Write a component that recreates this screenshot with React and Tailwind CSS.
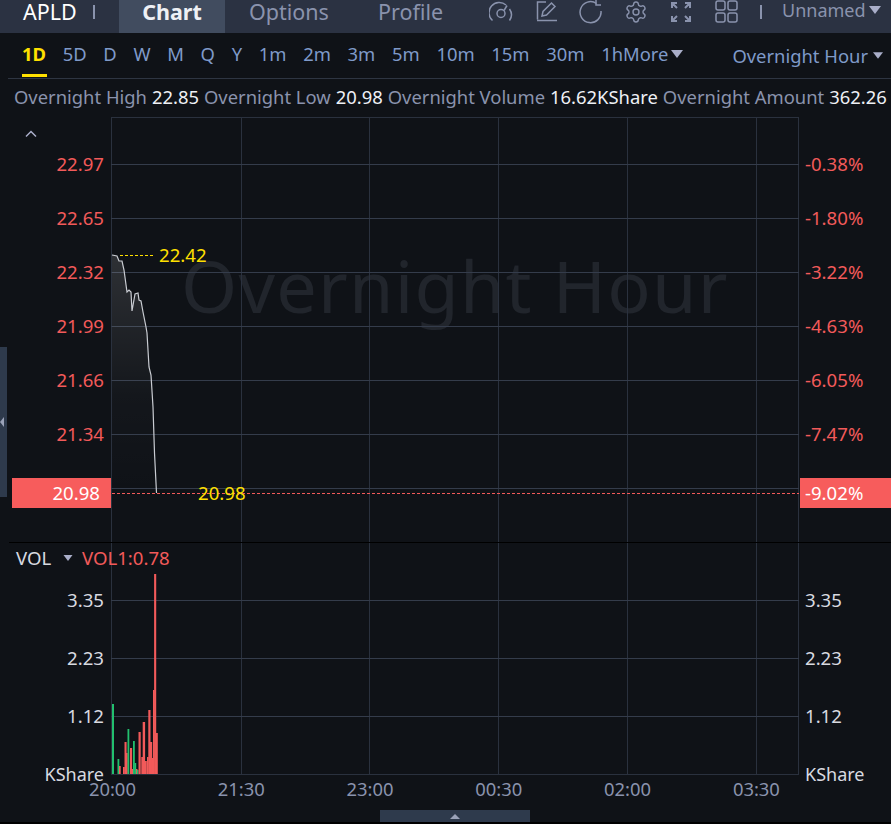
import React from "react";
import { Settings } from "lucide-react";

const intervals = ["5D", "D", "W", "M", "Q", "Y", "1m", "2m", "3m", "5m", "10m", "15m", "30m"];

const priceTicks = [
  { left: "22.97", right: "-0.38%" },
  { left: "22.65", right: "-1.80%" },
  { left: "22.32", right: "-3.22%" },
  { left: "21.99", right: "-4.63%" },
  { left: "21.66", right: "-6.05%" },
  { left: "21.34", right: "-7.47%" },
];

const volTicks = ["3.35", "2.23", "1.12", "KShare"];
const timeTicks = ["20:00", "21:30", "23:00", "00:30", "02:00", "03:30"];

const gridX = [241, 369, 498, 627, 756];
const priceLine =
  "112 255L117 256L119 261L122 261L124 270L127 292L129 290L131 292L132 311L135 294L138 293L139 300L141 301L143 312L146 327L147 333L149 367L151 375L153 407L154.500 453L156.500 493";

const RED = "#f25a5a";
const GREEN = "#22c06e";

// x, width, top y, colour
const bars = [
  [112, 2, 704, GREEN], [117.5, 1.8, 759, GREEN], [119, 1.7, 766, RED], [123, 1.8, 767, RED],
  [124.5, 2.1, 742, RED], [126, 1.7, 753, RED], [127.5, 1.8, 729, GREEN], [130, 2.1, 748, RED],
  [131.7, 1.9, 769, RED], [133, 1.8, 741, GREEN], [134.5, 1.7, 763, GREEN], [136, 1.5, 769, RED],
  [136.8, 1.7, 770, GREEN], [138.5, 2.2, 732, RED], [141.3, 1.9, 757, RED], [142.7, 2.4, 722, RED],
  [144.7, 2.1, 761, RED], [147, 1.7, 757, RED], [148.3, 2.2, 710, RED], [150, 2.2, 742, RED],
  [151.7, 1.8, 758, RED], [153, 1.6, 690, RED], [154.1, 2.1, 574, RED], [155.7, 2.1, 733, RED],
];

const Caret = ({ className }) => (
  <svg viewBox="0 0 12 8" className={className} fill="currentColor">
    <path d="M0 0h12L6 8z" />
  </svg>
);

const Toolbar = () => (
  <div className="ml-[24px] flex items-center gap-[21px] text-[#8a93ad]">
    <svg viewBox="0 0 24 24" className="w-6 h-6" fill="none" stroke="currentColor" strokeWidth="1.5">
      <path d="M3.500 20.500A10 10 0 0 1 17 5M20.500 9A10 10 0 0 1 20.500 20.500" />
      <circle cx="12" cy="13.500" r="4" />
      <path d="M15 10.500l3-5" />
    </svg>
    <svg viewBox="0 0 24 24" className="w-6 h-6" fill="none" stroke="currentColor" strokeWidth="1.5">
      <path d="M12 2H3.500v17.500M3 20.500h20" />
      <path d="M8 16l1-4.500L17.500 3l3.500 3.500-8.500 8.500z" />
    </svg>
    <svg viewBox="0 0 24 24" className="w-6 h-6" fill="none" stroke="currentColor" strokeWidth="1.5">
      <path d="M22 11A10.500 10.500 0 1 1 17.500 3.500" />
      <path d="M17 0v5h5" />
    </svg>
    <Settings className="w-6 h-6" strokeWidth={1.4} />
    <svg viewBox="0 0 24 24" className="w-6 h-6" fill="none" stroke="currentColor" strokeWidth="2">
      <path d="M8 3H3v5M3 3l5 5M16 3h5v5M21 3l-5 5M3 16v5h5M3 21l5-5M21 16v5h-5M21 21l-5-5" />
    </svg>
    <svg viewBox="0 0 24 24" className="w-6 h-6" fill="none" stroke="currentColor" strokeWidth="1.5">
      <rect x="2" y="1" width="9" height="9" rx="2" />
      <rect x="14" y="1" width="9" height="9" rx="2" />
      <rect x="2" y="13" width="9" height="9" rx="2" />
      <rect x="14" y="13" width="9" height="9" rx="2" />
    </svg>
  </div>
);

const PricePlot = () => (
  <svg viewBox="111 117 688 425" className="block w-[688px] h-[425px]" fill="none">
    <defs>
      <linearGradient id="area" x1="0" y1="0" x2="0" y2="1">
        <stop offset="0" stopColor="#ffffff" stopOpacity="0.13" />
        <stop offset="0.6" stopColor="#ffffff" stopOpacity="0.02" />
        <stop offset="1" stopColor="#ffffff" stopOpacity="0" />
      </linearGradient>
    </defs>
    <path d="M111.500 117V542M798.500 117V542M111 117.500H799" stroke="#2a313e" />
    {gridX.map((x) => (
      <path key={x} d={`M${x + 0.5} 117V542`} stroke="#2a313e" />
    ))}
    {[164, 218, 272, 326, 380, 434, 488].map((y) => (
      <path key={y} d={`M111 ${y + 0.5}H799`} stroke="#343c4b" />
    ))}
    <path d={`M${priceLine}L112 493Z`} fill="url(#area)" />
    <path d={`M${priceLine}`} stroke="#c9ccd2" strokeWidth="1.2" />
    <path d="M120 255.500H154" stroke="#ffe000" strokeDasharray="3 2" />
    <path d="M112 493.500H799" stroke={RED} strokeDasharray="3 2" />
  </svg>
);

const VolumePlot = () => (
  <svg viewBox="111 543 688 232" className="block w-[688px] h-[232px]" fill="none">
    <path d="M111.500 543V775M798.500 543V775M111 774.500H799" stroke="#2a313e" />
    {gridX.map((x) => (
      <path key={x} d={`M${x + 0.5} 543V775`} stroke="#2a313e" />
    ))}
    {[600, 658, 716].map((y) => (
      <path key={y} d={`M111 ${y + 0.5}H799`} stroke="#343c4b" />
    ))}
    {bars.map(([x, w, top, color], i) => (
      <rect key={i} x={x} y={top} width={w} height={774 - top} fill={color} />
    ))}
  </svg>
);

export default function App() {
  return (
    <div className="relative w-[891px] h-[824px] overflow-hidden bg-black font-['Noto_Sans','Open_Sans',sans-serif] text-[18.6px]">
      <div className="h-[822px] bg-[#0f1217] flex flex-col">
        {/* header */}
        <div className="h-[33px] shrink-0 bg-[#2b3242] flex items-start pl-[23px] whitespace-nowrap">
          <span className="w-[70px] text-[21.5px] leading-[23px] text-white">APLD</span>
          <span className="w-[2px] h-[14px] mt-[5px] bg-[#8a93ad]" />
          <div className="ml-[24px] w-[106px] h-[33px] bg-[#414c5f] text-center text-[21.5px] leading-[23px] font-bold text-[#eef0f5]">
            Chart
          </div>
          <span className="ml-[24px] w-[105px] text-[21.5px] leading-[24px] text-[#8a93ad]">Options</span>
          <span className="ml-[24px] w-[87px] text-[21.5px] leading-[24px] text-[#8a93ad]">Profile</span>
          <Toolbar />
          <span className="ml-[22px] w-[2px] h-[14px] mt-[5px] bg-[#8a93ad]" />
          <span className="ml-[20px] text-[18px] leading-[21px] text-[#8a93ad]">Unnamed</span>
          <Caret className="ml-[3px] mt-[6px] w-3 h-2 text-[#a9aec9]" />
        </div>

        {/* interval row */}
        <div className="relative h-[46px] shrink-0 ml-[8px] pl-[14px] pr-[8px] pb-[3px] border-b border-[#2e3542] flex items-center gap-[16.7px] text-[18.4px] text-[#7f9ac9] whitespace-nowrap">
          <span className="relative font-bold text-[#ffe000]">
            1D
            <span className="absolute left-0 top-[34px] w-[25px] h-[3px] bg-[#ffe000]" />
          </span>
          {intervals.map((it) => (
            <span key={it}>{it}</span>
          ))}
          <span className="flex items-center">
            1hMore
            <Caret className="ml-[3px] w-3 h-2 text-[#a9aec9]" />
          </span>
          <span className="ml-auto flex items-center gap-[5px] mt-[3px]">
            Overnight Hour
            <Caret className="w-[10px] h-[7px] text-[#a9aec9]" />
          </span>
        </div>

        {/* stats */}
        <div className="h-[38px] shrink-0 pl-[14px] pb-[2px] flex items-center gap-[5px] text-[18.4px] whitespace-nowrap">
          <span className="text-[#8a93ad]">Overnight High</span>
          <span className="text-[#eef0f5]">22.85</span>
          <span className="text-[#8a93ad]">Overnight Low</span>
          <span className="text-[#eef0f5]">20.98</span>
          <span className="text-[#8a93ad]">Overnight Volume</span>
          <span className="text-[#eef0f5]">16.62KShare</span>
          <span className="text-[#8a93ad]">Overnight Amount</span>
          <span className="text-[#eef0f5]">362.26</span>
        </div>

        {/* price pane */}
        <div className="h-[425px] shrink-0 ml-[12px] flex">
          <div className="relative w-[99px] pt-[20px] text-[#f25a5a]">
            <svg viewBox="0 0 12 8" className="absolute left-[13px] top-[13px] w-3 h-2 text-[#a9aec9]" fill="none" stroke="currentColor" strokeWidth="1.5">
              <path d="M1 6.500L6 1.500L11 6.500" />
            </svg>
            {priceTicks.map((t) => (
              <div key={t.left} className="h-[54px] flex items-center justify-end pr-[7px]">
                {t.left}
              </div>
            ))}
            <div className="mt-[17px] h-[30px] bg-[#f75c5c] text-white flex items-center justify-end pr-[11px]">
              20.98
            </div>
          </div>

          <div className="relative w-[688px]">
            <span className="absolute left-[70px] top-[121px] text-[72px] leading-[94px] tracking-[1.2px] text-[#21252c] whitespace-nowrap">
              Overnight Hour
            </span>
            <div className="absolute inset-0">
              <PricePlot />
            </div>
            <span className="absolute left-[48px] top-[126px] leading-[24px] text-[#ffe000]">22.42</span>
            <span className="absolute left-[87px] top-[364px] leading-[24px] text-[#ffe000]">20.98</span>
          </div>

          <div className="flex-1 pt-[20px] pl-[1px] text-[#f25a5a]">
            {priceTicks.map((t) => (
              <div key={t.right} className="h-[54px] flex items-center pl-[5px]">
                {t.right}
              </div>
            ))}
            <div className="mt-[17px] h-[30px] bg-[#f75c5c] text-white flex items-center pl-[5px]">
              -9.02%
            </div>
          </div>
        </div>

        {/* volume pane */}
        <div className="h-[232px] shrink-0 ml-[9px] border-t border-black flex">
          <div className="relative w-[102px] h-[231px] pt-[28px] text-[#d8dae0]">
            <div className="absolute left-[7px] top-[3px] flex items-center whitespace-nowrap leading-[24px]">
              <span className="w-[47px]">VOL</span>
              <Caret className="w-[10px] h-[6px] text-[#a9aec9]" />
              <span className="ml-[9px] text-[#f25a5a]">VOL1:0.78</span>
            </div>
            {volTicks.map((t) => (
              <div key={t} className="h-[58px] shrink-0 flex items-center justify-end pr-[7px] whitespace-nowrap">
                {t === "KShare" ? <span className="text-[18px]">{t}</span> : t}
              </div>
            ))}
          </div>
          <div className="w-[688px] h-[231px]">
            <VolumePlot />
          </div>
          <div className="flex-1 h-[231px] pt-[28px] pl-[6px] text-[#d8dae0] whitespace-nowrap">
            {volTicks.map((t) => (
              <div key={t} className="h-[58px] flex items-center">
                {t === "KShare" ? <span className="text-[18px]">{t}</span> : t}
              </div>
            ))}
          </div>
        </div>

        {/* time axis */}
        <div className="h-[24px] shrink-0 mt-[3px] pl-[48px] flex text-[#8a93ad] text-[18.4px] leading-[24px]">
          {timeTicks.map((t) => (
            <span key={t} className="w-[128.8px] text-center">
              {t}
            </span>
          ))}
        </div>

        <div className="mt-[9px] ml-[380px] w-[150px] h-[12px] bg-[#2e3a4c] flex items-center justify-center">
          <svg viewBox="0 0 10 5" className="w-[10px] h-[5px] text-[#9aa2b8]" fill="currentColor">
            <path d="M0 5h10L5 0z" />
          </svg>
        </div>
      </div>

      {/* left collapse handle */}
      <div className="absolute left-0 top-[347px] w-[7px] h-[150px] bg-[#2e3a4c] flex items-center">
        <svg viewBox="0 0 4 10" className="w-1 h-[10px] text-[#9aa2b8]" fill="currentColor">
          <path d="M4 0v10L0 5z" />
        </svg>
      </div>
    </div>
  );
}
